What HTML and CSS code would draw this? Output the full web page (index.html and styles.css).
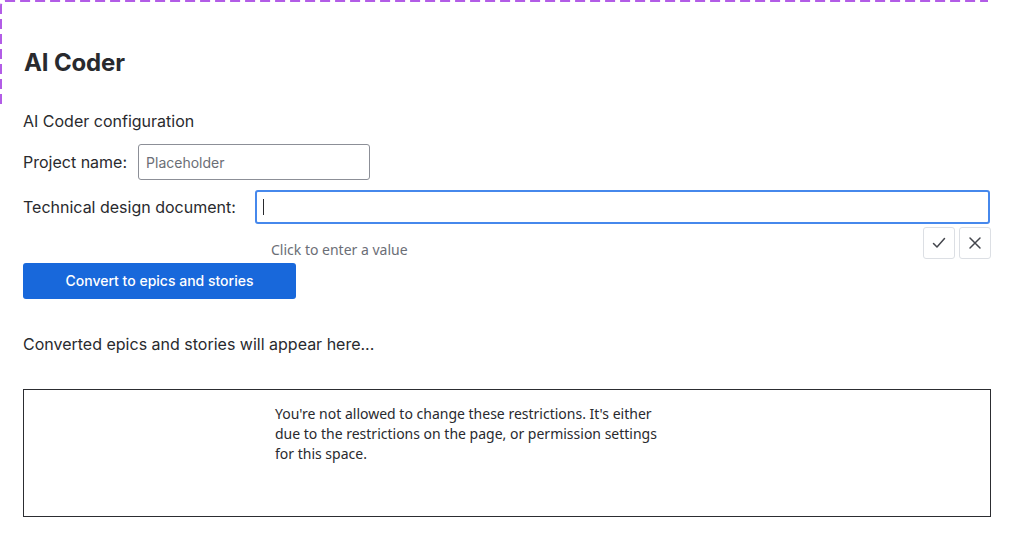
FILE: index.html
```html
<!DOCTYPE html>
<html>
<head>
<meta charset="utf-8">
<link rel="stylesheet" href="styles.css">
</head>
<body>
<svg class="dash-frame" width="1014" height="110" viewBox="0 0 1014 110" aria-hidden="true">
  <path d="M1 104 V6 Q1 1 6 1 H988" fill="none" stroke="#b25ce6" stroke-width="2" stroke-dasharray="10 5"/>
</svg>
<main class="page">
  <h1 class="title">AI Coder</h1>
  <p class="section">AI Coder configuration</p>
  <div class="row row-project">
    <label class="label">Project name:</label>
    <div class="input input-project"><span class="placeholder">Placeholder</span></div>
  </div>
  <div class="row row-tdd">
    <label class="label">Technical design document:</label>
    <div class="input input-focus"><span class="caret"></span></div>
  </div>
  <div class="helper-row">
    <span class="helper">Click to enter a value</span>
    <div class="actions">
      <button class="icon-btn" aria-label="Confirm">
        <svg width="16" height="16" viewBox="0 0 16 16"><path d="M2.5 8.5 L6 12 L13.5 3.5" fill="none" stroke="#44464d" stroke-width="1.5" stroke-linecap="round" stroke-linejoin="round"/></svg>
      </button>
      <button class="icon-btn" aria-label="Cancel">
        <svg width="16" height="16" viewBox="0 0 16 16"><path d="M3 3 L13 13 M13 3 L3 13" fill="none" stroke="#44464d" stroke-width="1.5" stroke-linecap="round"/></svg>
      </button>
    </div>
  </div>
  <button class="primary">Convert to epics and stories</button>
  <p class="result-note">Converted epics and stories will appear here...</p>
  <div class="restrict-box">
    <p class="restrict-text">You're not allowed to change these restrictions. It's either due to the restrictions on the page, or permission settings for this space.</p>
  </div>
</main>
</body>
</html>
```

FILE: styles.css
```css
html, body {
  margin: 0;
  padding: 0;
  background: #ffffff;
}
body {
  font-family: Inter, "Noto Sans", "Liberation Sans", sans-serif;
  color: #292a2e;
  width: 1014px;
  height: 538px;
  overflow: hidden;
  position: relative;
}
.dash-frame {
  position: absolute;
  left: 0;
  top: 0;
  pointer-events: none;
}
.page {
  padding: 0 23px;
  display: flex;
  flex-direction: column;
}
.title {
  margin: 49px 0 0 1px;
  font-size: 24px;
  line-height: 28px;
  font-weight: 700;
  letter-spacing: -0.15px;
}
.section {
  margin: 34px 0 0 0;
  font-size: 16px;
  line-height: 20px;
}
.row {
  display: flex;
  align-items: center;
}
.row-project {
  margin-top: 13px;
  gap: 11px;
}
.row-tdd {
  margin-top: 10px;
  gap: 19px;
}
.label {
  font-size: 16px;
  line-height: 20px;
}
.input {
  box-sizing: border-box;
  border-radius: 3px;
  display: flex;
  align-items: center;
}
.input-project {
  width: 232px;
  height: 36px;
  border: 1px solid #8c8f97;
  padding-left: 7px;
}
.placeholder {
  font-size: 14px;
  color: #6b6e76;
}
.input-focus {
  flex: 1;
  height: 34px;
  border: 2px solid #4688ec;
  padding-left: 6px;
  margin-right: 1px;
}
.caret {
  width: 1px;
  height: 16px;
  background: #292a2e;
}
.helper-row {
  display: flex;
  justify-content: space-between;
  align-items: flex-end;
  margin-top: 3px;
  padding-left: 248px;
  padding-right: 0;
}
.helper {
  font-family: "Noto Sans", Lato, "Liberation Sans", sans-serif;
  font-size: 14px;
  line-height: 20px;
  color: #6b6e76;
  position: relative;
  top: 1px;
}
.actions {
  display: flex;
  gap: 4px;
}
.icon-btn {
  width: 32px;
  height: 32px;
  box-sizing: border-box;
  border: 1px solid #dcdfe4;
  border-radius: 3px;
  background: #ffffff;
  padding: 0;
  display: flex;
  align-items: center;
  justify-content: center;
}
.primary {
  margin-top: 4px;
  align-self: flex-start;
  width: 273px;
  height: 36px;
  border: none;
  border-radius: 3px;
  background: #1868db;
  color: #ffffff;
  font-family: Inter, "Noto Sans", "Liberation Sans", sans-serif;
  font-size: 14px;
  font-weight: 500;
  padding: 0 0 2px 0;
}
.result-note {
  margin: 35px 0 0 0;
  font-size: 16px;
  line-height: 20px;
}
.restrict-box {
  margin-top: 35px;
  height: 128px;
  box-sizing: border-box;
  border: 1px solid #2c2d31;
  padding: 14px 0 0 251px;
}
.restrict-text {
  margin: 0;
  width: 395px;
  font-family: "Noto Sans", Lato, "Liberation Sans", sans-serif;
  font-size: 14px;
  line-height: 20px;
  color: #292a2e;
}
```
